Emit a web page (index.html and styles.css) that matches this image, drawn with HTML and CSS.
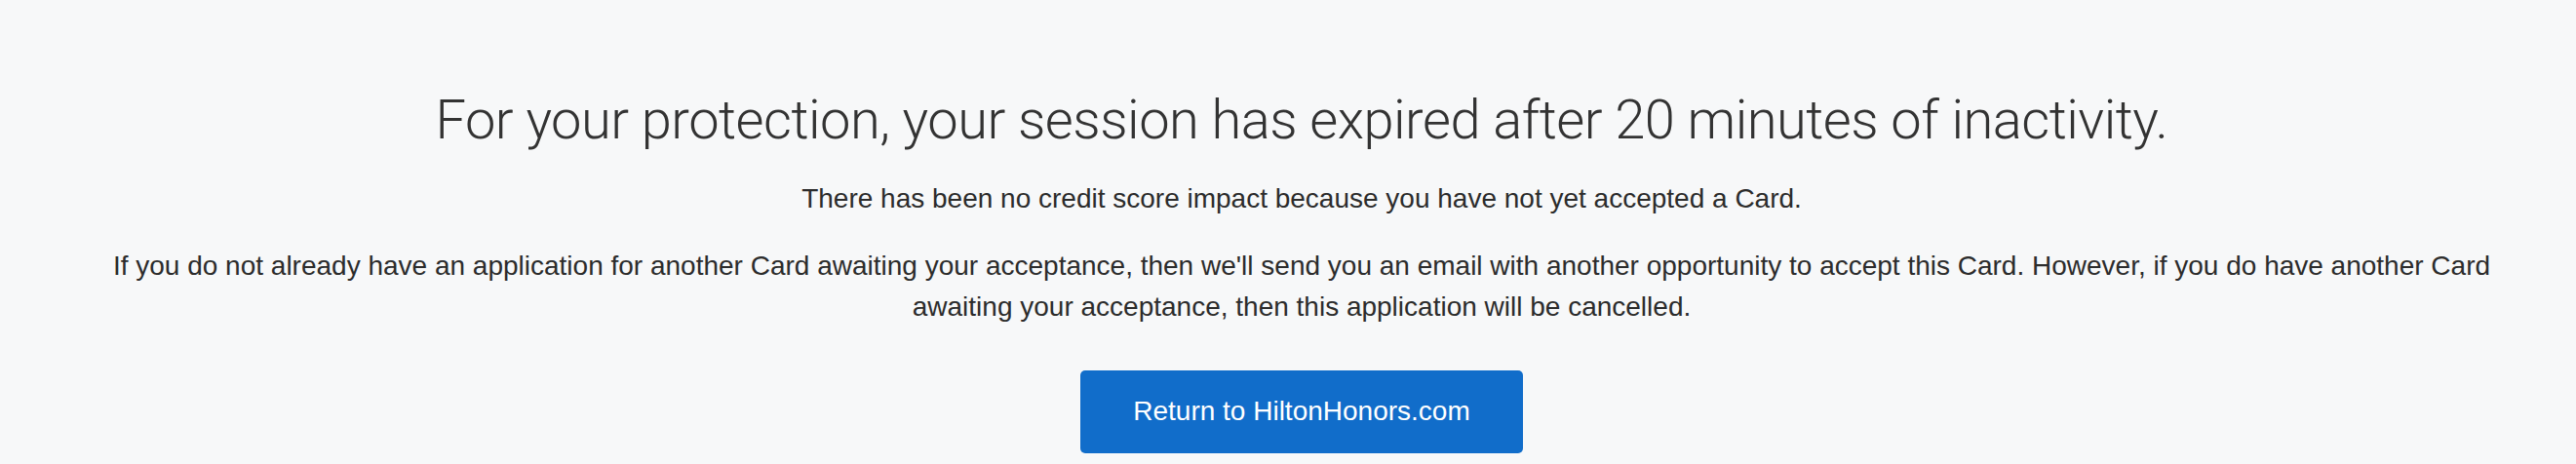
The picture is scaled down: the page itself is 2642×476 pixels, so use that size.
FILE: index.html
```html
<!doctype html>
<html lang="en">
<head>
    <meta charset="UTF-8">
    <title>Session expired</title>
    <link rel="stylesheet" href="styles.css">
</head>
<body>
<div class="page">
    <div class="timeout">
        <h1 class="timeout-title">For your protection, your session has expired after 20 minutes of inactivity.</h1>

        <p>There has been no credit score impact because you have not yet accepted a Card.</p>

        <p>If you do not already have an application for another Card awaiting your acceptance, then we'll send you an email with another opportunity to accept this Card. However, if you do have another Card awaiting your acceptance, then this application will be cancelled.</p>

        <div class="actions">
            <a class="btn-primary" href="#">Return to HiltonHonors.com</a>
        </div>
    </div>
</div>
</body>
</html>
```

FILE: styles.css
```css
html, body {
    margin: 0;
    padding: 0;
    background: #f7f8f9;
}

body {
    font-family: "Liberation Sans", Arial, sans-serif;
    font-size: 28px;
    line-height: 42px;
    color: #2c2c2c;
}

.page {
    padding: 90px 56px 0 84px;
}

.timeout {
    text-align: center;
}

.timeout-title {
    margin: 0 0 26px;
    font-family: Roboto, "Liberation Sans", sans-serif;
    font-weight: 300;
    font-size: 56px;
    line-height: 67px;
    letter-spacing: -0.5px;
    color: #333333;
    white-space: nowrap;
}

.timeout p {
    margin: 0 0 27px;
}

.actions {
    padding-top: 17px;
}

.btn-primary {
    display: inline-block;
    padding: 21px 54px 22px;
    background: #116dca;
    color: #ffffff;
    text-decoration: none;
    border-radius: 5px;
    font-size: 28px;
    line-height: 42px;
}
```
